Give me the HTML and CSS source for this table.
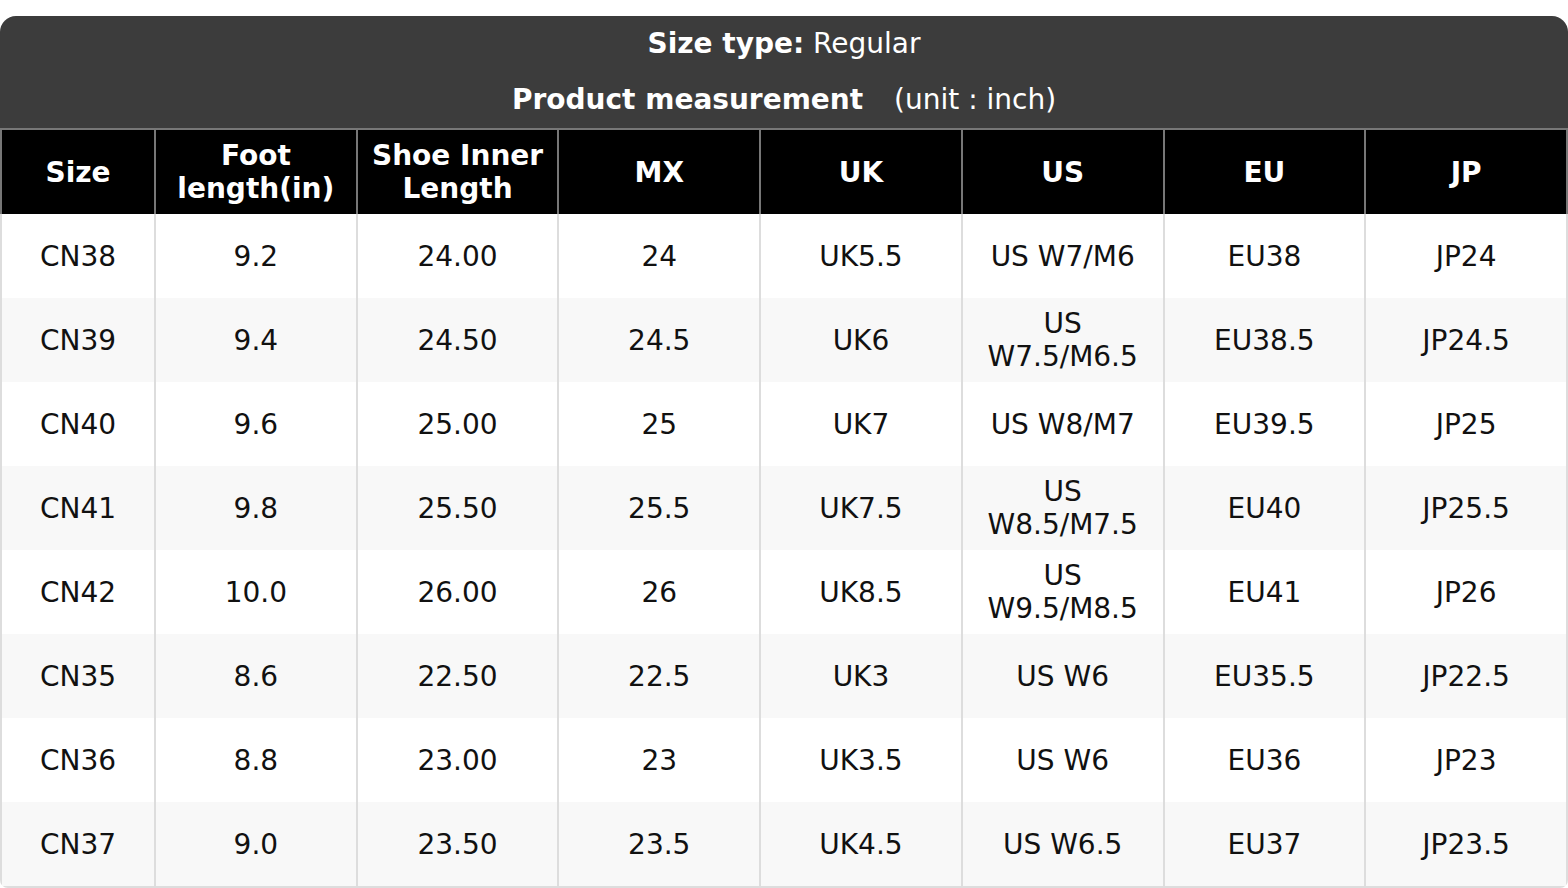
FILE: index.html
```html
<!DOCTYPE html>
<html lang="en">
<head>
<meta charset="utf-8">
<title>Size chart</title>
<link rel="stylesheet" href="styles.css">
</head>
<body>
<div class="chart">
  <div class="caption">
    <div class="caption-line"><b>Size type:</b> Regular</div>
    <div class="caption-line"><b>Product measurement</b> <span class="unit">(unit : inch)</span></div>
  </div>
  <table class="sizes">
    <colgroup>
      <col class="col-first">
      <col><col><col><col><col><col><col>
    </colgroup>
    <thead>
      <tr>
        <th>Size</th>
        <th>Foot length(in)</th>
        <th>Shoe Inner Length</th>
        <th>MX</th>
        <th>UK</th>
        <th>US</th>
        <th>EU</th>
        <th>JP</th>
      </tr>
    </thead>
    <tbody>
      <tr><td>CN38</td><td>9.2</td><td>24.00</td><td>24</td><td>UK5.5</td><td>US W7/M6</td><td>EU38</td><td>JP24</td></tr>
      <tr><td>CN39</td><td>9.4</td><td>24.50</td><td>24.5</td><td>UK6</td><td>US W7.5/M6.5</td><td>EU38.5</td><td>JP24.5</td></tr>
      <tr><td>CN40</td><td>9.6</td><td>25.00</td><td>25</td><td>UK7</td><td>US W8/M7</td><td>EU39.5</td><td>JP25</td></tr>
      <tr><td>CN41</td><td>9.8</td><td>25.50</td><td>25.5</td><td>UK7.5</td><td>US W8.5/M7.5</td><td>EU40</td><td>JP25.5</td></tr>
      <tr><td>CN42</td><td>10.0</td><td>26.00</td><td>26</td><td>UK8.5</td><td>US W9.5/M8.5</td><td>EU41</td><td>JP26</td></tr>
      <tr><td>CN35</td><td>8.6</td><td>22.50</td><td>22.5</td><td>UK3</td><td>US W6</td><td>EU35.5</td><td>JP22.5</td></tr>
      <tr><td>CN36</td><td>8.8</td><td>23.00</td><td>23</td><td>UK3.5</td><td>US W6</td><td>EU36</td><td>JP23</td></tr>
      <tr><td>CN37</td><td>9.0</td><td>23.50</td><td>23.5</td><td>UK4.5</td><td>US W6.5</td><td>EU37</td><td>JP23.5</td></tr>
    </tbody>
  </table>
</div>
</body>
</html>
```

FILE: styles.css
```css
html, body {
  margin: 0;
  padding: 0;
  background: #ffffff;
}

body {
  padding-top: 16px;
  font-family: "DejaVu Sans", "Noto Sans", sans-serif;
  font-size: 28px;
  color: #111111;
}

.chart {
  width: 1568px;
  border-radius: 16px 16px 8px 8px;
  overflow: hidden;
}

.caption {
  background: #3c3c3c;
  color: #ffffff;
  text-align: center;
}

.caption-line {
  height: 56px;
  line-height: 56px;
  white-space: nowrap;
}

.unit {
  margin-left: 22px;
}

.sizes {
  width: 100%;
  table-layout: fixed;
  border-collapse: separate;
  border-spacing: 0;
  border-bottom: 2px solid #dddddd;
}

.col-first {
  width: 156px;
}

.sizes th,
.sizes td {
  text-align: center;
  vertical-align: middle;
  padding: 0 12px;
  font-size: 28px;
  line-height: 33px;
}

.sizes thead tr {
  height: 86px;
}

.sizes th {
  background: #000000;
  color: #ffffff;
  font-weight: bold;
  border-top: 2px solid #777777;
  border-right: 2px solid #777777;
}

.sizes th:first-child {
  border-left: 2px solid #777777;
}

.sizes tbody tr {
  height: 84px;
}

.sizes tbody tr:nth-child(even) td {
  background: #f8f8f8;
}

.sizes td {
  background: #ffffff;
  border-right: 2px solid #dddddd;
}

.sizes td:first-child {
  border-left: 2px solid #dddddd;
}
```
